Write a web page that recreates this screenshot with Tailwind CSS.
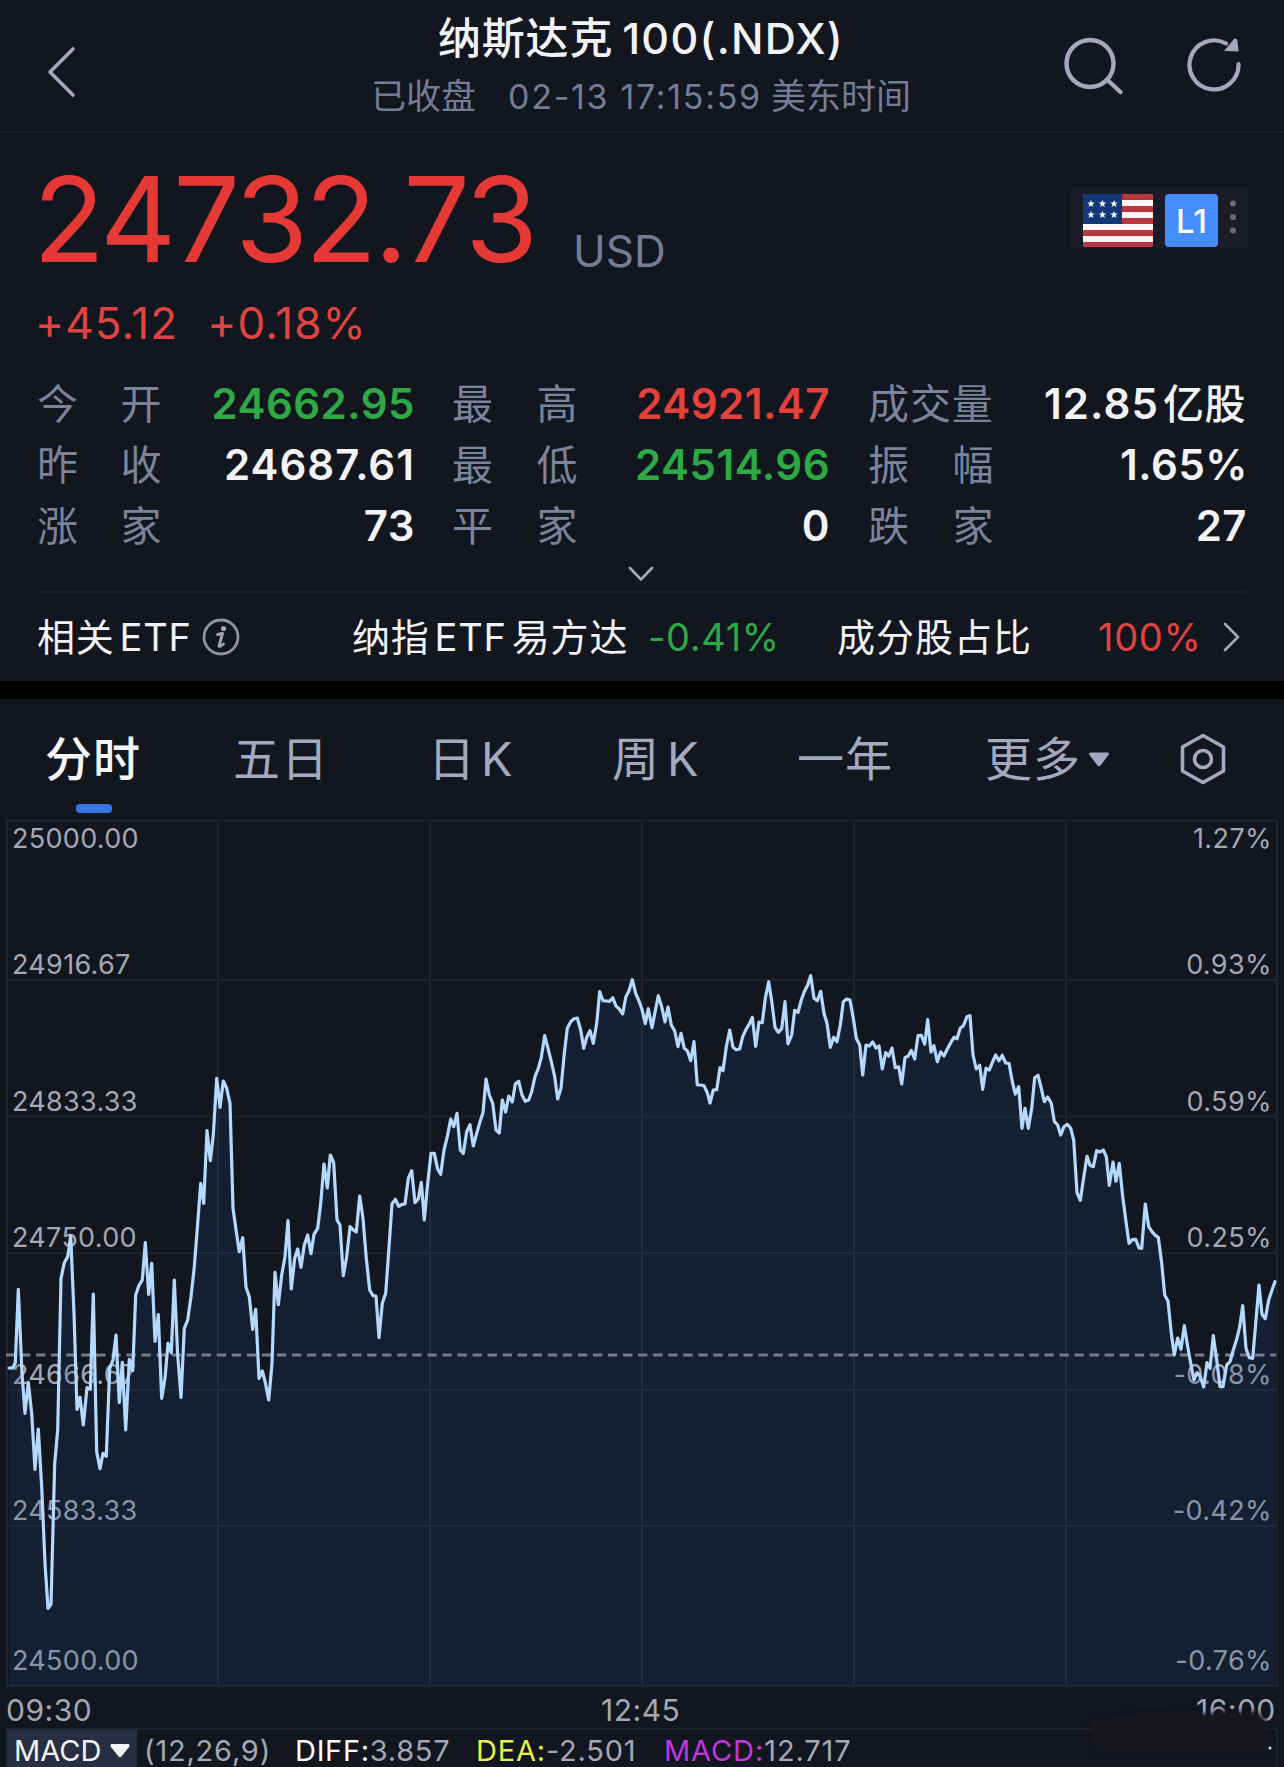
<!DOCTYPE html>
<html lang="zh-CN">
<head>
<meta charset="utf-8">
<title>纳斯达克100(.NDX)</title>
<script src="https://cdn.jsdelivr.net/npm/@tailwindcss/browser@4"></script>
</head>
<body class="w-[1284px] h-[1767px] overflow-hidden bg-[#12161f] font-['Inter','Noto_Sans_CJK_SC',sans-serif] text-[#f2f3f7] whitespace-nowrap">

<header class="flex h-[133px] border-b-2 border-[#1a1e29]">
  <div class="w-[369px] pl-[47px] pt-[46px]">
    <svg class="w-[30px] h-[52px]" viewBox="0 0 30 52" fill="none" stroke="#a3a9bd" stroke-width="3.6" stroke-linecap="round" stroke-linejoin="round"><path d="M26 3 3 26 26 49"/></svg>
  </div>
  <div class="w-[544px] flex flex-col items-center pt-[14px]">
    <h1 class="flex items-center gap-[9px] h-[48px] font-medium"><span class="text-[43px] tracking-[0.8px]">纳斯达克</span><span class="text-[43px] tracking-[1.3px]">100(.NDX)</span></h1>
    <p class="flex items-center h-[40px] mt-[14px] text-[35px] text-[#757c96]"><span>已收盘</span><span class="ml-[32px] text-[34px] tracking-[1.7px]">02-13 17:15:59</span><span class="ml-[9px]">美东时间</span></p>
  </div>
  <div class="flex pl-[149px] pt-[34px]">
    <svg class="w-[64px] h-[64px]" viewBox="0 0 64 64" fill="none" stroke="#a3a9bd" stroke-width="4.4" stroke-linecap="round"><circle cx="28" cy="29.500" r="23.500"/><path d="M45 45.500 58.500 58"/></svg>
    <svg class="ml-[59px] w-[64px] h-[64px]" viewBox="0 0 64 64"><path d="M53.500 30A24.500 24.500 0 1 1 41 9.500" fill="none" stroke="#a3a9bd" stroke-width="4.200" stroke-linecap="round"/><path d="M49.500 4.500Q52 4 52.500 7L53.500 17.500 39 17Z" fill="#a3a9bd"/></svg>
  </div>
</header>

<section class="h-[548px] px-[37px]">
  <div class="flex justify-between h-[145px]">
    <div class="flex items-baseline -ml-[4px] mt-[1px]">
      <span class="text-[118px] leading-[170px] tracking-[-3px] text-[#e43934]">24732.73</span>
      <span class="ml-[38px] text-[44px] leading-[48px] translate-y-[5px] text-[#757c96]">USD</span>
    </div>
    <div class="flex items-start mt-[54px] h-[61px] w-[177px] bg-[#1a1d27] pl-[12px] pt-[7px] -mr-[1px]">
      <svg class="w-[70px] h-[53px] rounded-[3px]" viewBox="0 0 70 53">
        <rect width="70" height="53" fill="#fff5f5"/>
        <g fill="#b9363f"><rect width="70" height="6"/><rect y="12" width="70" height="6"/><rect y="24" width="70" height="6"/><rect y="36" width="70" height="6"/><rect y="48" width="70" height="5"/></g>
        <rect width="39" height="30" fill="#12387a"/>
        <g fill="#f4f7ff">
          <path id="st" d="M8 5.800 9 8.400 11.800 8.500 9.600 10.200 10.400 13 8 11.400 5.600 13 6.400 10.200 4.200 8.500 7 8.400Z"/>
          <use href="#st" x="11.500"/><use href="#st" x="23"/><use href="#st" y="11"/><use href="#st" x="11.500" y="11"/><use href="#st" x="23" y="11"/>
        </g>
      </svg>
      <span class="ml-[12px] flex h-[53px] w-[53px] items-center justify-center rounded-[4px] bg-[#458cff] pt-[2px] text-[33px] font-medium text-white">L1</span>
      <svg class="ml-[12px] w-[6px] h-[40px] mt-[6px]" viewBox="0 0 6 40" fill="#6a6c78"><circle cx="3" cy="3.500" r="3"/><circle cx="3" cy="17" r="3"/><circle cx="3" cy="30.500" r="3"/></svg>
    </div>
  </div>
  <div class="flex h-[48px] mt-[21px] -ml-[2px] items-center gap-[29px] text-[44px] text-[#e14440] tracking-[1.1px]"><span>+45.12</span><span>+0.18%</span></div>

  <div class="mt-[27px] grid grid-cols-[378px_415px_416px] auto-rows-[61px] text-[42px] leading-[60px] tracking-[0.5px]">
    <div class="flex justify-between"><span class="flex w-[125px] justify-between text-[41px] text-[#7c849b]"><i class="not-italic">今</i><i class="not-italic">开</i></span><b class="font-semibold text-[#2fa846]">24662.95</b></div>
    <div class="flex justify-between pl-[37px]"><span class="flex w-[126px] justify-between text-[41px] text-[#7c849b]"><i class="not-italic">最</i><i class="not-italic">高</i></span><b class="font-semibold text-[#e4403c]">24921.47</b></div>
    <div class="flex justify-between pl-[38px]"><span class="text-[41px] text-[#7c849b] tracking-[0.9px]">成交量</span><b class="font-semibold flex gap-[4px]"><span class="tracking-[1.1px]">12.85</span><span class="text-[41px] font-medium">亿股</span></b></div>
    <div class="flex justify-between"><span class="flex w-[125px] justify-between text-[41px] text-[#7c849b]"><i class="not-italic">昨</i><i class="not-italic">收</i></span><b class="font-semibold tracking-[1px]">24687.61</b></div>
    <div class="flex justify-between pl-[37px]"><span class="flex w-[126px] justify-between text-[41px] text-[#7c849b]"><i class="not-italic">最</i><i class="not-italic">低</i></span><b class="font-semibold text-[#2fa846]">24514.96</b></div>
    <div class="flex justify-between pl-[38px]"><span class="flex w-[126px] justify-between text-[41px] text-[#7c849b]"><i class="not-italic">振</i><i class="not-italic">幅</i></span><b class="font-semibold -mr-[2px]">1.65%</b></div>
    <div class="flex justify-between"><span class="flex w-[125px] justify-between text-[41px] text-[#7c849b]"><i class="not-italic">涨</i><i class="not-italic">家</i></span><b class="font-semibold">73</b></div>
    <div class="flex justify-between pl-[37px]"><span class="flex w-[126px] justify-between text-[41px] text-[#7c849b]"><i class="not-italic">平</i><i class="not-italic">家</i></span><b class="font-semibold">0</b></div>
    <div class="flex justify-between pl-[38px]"><span class="flex w-[126px] justify-between text-[41px] text-[#7c849b]"><i class="not-italic">跌</i><i class="not-italic">家</i></span><b class="font-semibold -mr-[1px]">27</b></div>
  </div>
  <div class="h-[36px] flex justify-center border-b-2 border-[#1a1e29] pt-[9px]">
    <svg class="-ml-[2px] w-[26px] h-[16px]" viewBox="0 0 26 16" fill="none" stroke="#a3a9bd" stroke-width="2.600" stroke-linecap="round" stroke-linejoin="round"><path d="M2 2 13 13.500 24 2"/></svg>
  </div>
  <div class="flex items-center h-[88px] text-[38px]">
    <span class="flex w-[165px] items-center gap-[5px] tracking-[0.8px]"><span>相关</span><span>ETF</span></span>
    <svg class="w-[38px] h-[38px]" viewBox="0 0 38 38"><circle cx="19" cy="19" r="17" fill="none" stroke="#8f93a3" stroke-width="2.800"/><circle cx="21.500" cy="10.500" r="2.600" fill="#a3a7b5"/><path d="M15.500 16.500Q19 15.500 20.500 15.500L17 28Q17 29.500 21.500 26" fill="none" stroke="#a3a7b5" stroke-width="2.800" stroke-linecap="round" stroke-linejoin="round"/></svg>
    <span class="ml-[112px] w-[296px] flex items-center gap-[5px] tracking-[0.8px]"><span>纳指</span><span>ETF</span><span>易方达</span></span>
    <span class="w-[189px] text-[#2fa846] tracking-[0.6px]">-0.41%</span>
    <span class="w-[261px] tracking-[1px]">成分股占比</span>
    <span class="w-[125px] text-[#e14440] tracking-[0.7px]">100%</span>
    <svg class="w-[18px] h-[32px]" viewBox="0 0 18 32" fill="none" stroke="#a3a9bd" stroke-width="2.600" stroke-linecap="round" stroke-linejoin="round"><path d="M2 3 15 16 2 29"/></svg>
  </div>
</section>

<div class="h-[18px] bg-black"></div>

<nav class="flex h-[120px] items-start pt-[30px] text-[47px] leading-[60px] tracking-[1px] text-[#a3a9be]">
  <div class="ml-[45px] w-[188px] flex flex-col items-start"><span class="font-medium text-[#f5f6fa]">分时</span><span class="mt-[15px] ml-[31px] h-[9px] w-[36px] rounded-[4px] bg-[#3775e4]"></span></div>
  <span class="w-[195px]">五日</span>
  <span class="w-[184px] flex gap-[5px]"><span>日</span><span>K</span></span>
  <span class="w-[185px] flex gap-[7px]"><span>周</span><span>K</span></span>
  <span class="w-[188px]">一年</span>
  <span class="w-[195px] flex items-center"><span>更多</span><svg class="ml-[7px] w-[22px] h-[15px]" viewBox="0 0 22 15" fill="#a3a9be"><path d="M2.500 0.500H19.500Q22 1 20.500 3L12.500 13.500Q11 15 9.500 13.500L1.500 3Q0 1 2.500 0.500Z"/></svg></span>
  <svg class="mt-[4px] w-[46px] h-[52px]" viewBox="0 0 46 52" fill="none" stroke="#a3a9be" stroke-width="3.600" stroke-linejoin="round"><path d="M23 2.500 43.500 14V38L23 49.500 2.500 38V14Z"/><circle cx="23" cy="26" r="8.500"/></svg>
</nav>

<main class="relative h-[868px]">
  <svg class="absolute inset-0 w-[1284px] h-[868px]" viewBox="0 819 1284 868" fill="none">
    <g stroke="#212530" stroke-width="2">
      <path d="M6 820.500H1278M6 1686H1278M7 820V1686M1277 820V1686"/>
      <path d="M7 980H1277M7 1116.500H1277M7 1253H1277M7 1390H1277M7 1526H1277M218 820V1686M430 820V1686M642 820V1686M854 820V1686M1066 820V1686" stroke="#1f232e"/>
    </g>
  </svg>
  <div class="absolute left-[12px] top-0 text-[27px] leading-[30px] tracking-[0.3px] text-[#a4a8b5]">
    <div class="mt-[5px] h-[126px]">25000.00</div><div class="h-[137px]">24916.67</div><div class="h-[136px]">24833.33</div><div class="h-[137px]">24750.00</div><div class="h-[136px]">24666.67</div><div class="h-[150px]">24583.33</div><div>24500.00</div>
  </div>
  <div class="absolute right-[12px] top-0 text-right text-[27px] leading-[30px] tracking-[0.4px] text-[#a4a8b5]">
    <div class="mt-[5px] h-[126px]">1.27%</div><div class="h-[137px]">0.93%</div><div class="h-[136px]">0.59%</div><div class="h-[137px]">0.25%</div><div class="h-[136px]">-0.08%</div><div class="h-[150px]">-0.42%</div><div>-0.76%</div>
  </div>
  <svg class="absolute inset-0 w-[1284px] h-[868px]" viewBox="0 819 1284 868" fill="none">
    <path id="area" fill="#1c467d" fill-opacity="0.2"/>
    <path d="M6 1355H1276" stroke="#757b8a" stroke-width="2.800" stroke-dasharray="9.300 5.750"/>
    <path id="line" stroke="#b5d9fd" stroke-width="3.200" stroke-linejoin="round" stroke-linecap="round"/>
  </svg>
</main>

<footer>
  <div class="relative flex h-[41px] items-center pl-[6px] pt-[5px] text-[30px] tracking-[0.5px] text-[#a4a8b5]"><span class="w-[595px]">09:30</span><span class="w-[595px]">12:45</span><span>16:00</span>
    <svg class="absolute left-[1070px] top-[16px] w-[214px] h-[62px]" viewBox="0 0 214 62"><defs><filter id="soft" x="-10%" y="-30%" width="120%" height="160%"><feGaussianBlur stdDeviation="2.200"/></filter></defs><path d="M20 16 60 11 120 9 140 11 150 7 172 9 186 8 196 17 199 26 204 40 196 52 24 50Z" fill="#12151e" filter="url(#soft)"/><circle cx="200" cy="45" r="1.500" fill="#d8dae2"/></svg>
  </div>
  <div class="ml-[6px] mr-[6px] flex h-[39px] items-center border-x-2 border-t-2 border-[#1f232e] text-[29px] text-[#a4a8b5]">
    <span class="-ml-[1px] flex h-full w-[130px] items-center bg-[#272e42] pl-[7px] pt-[4px] text-[#f2f3f7]"><span class="w-[96px]">MACD</span><svg class="w-[20px] h-[14px]" viewBox="0 0 20 14" fill="#f2f3f7"><path d="M1.500 0H18.500Q20.500 1 19 3L11.500 12.500Q10 14 8.500 12.500L1 3Q-.5 1 1.500 0Z"/></svg></span>
    <span class="ml-[7px] w-[151px] pt-[4px] tracking-[0.8px]">(12,26,9)</span>
    <span class="w-[181px] pt-[4px] tracking-[0.7px]"><span class="text-white">DIFF:</span>3.857</span>
    <span class="w-[188px] pt-[4px] tracking-[0.8px]"><span class="text-[#e9f04a]">DEA:</span>-2.501</span>
    <span class="pt-[4px] tracking-[0.9px]"><span class="text-[#c236e0]">MACD:</span>12.717</span>
  </div>
</footer>

<script>
// Intraday samples: [origin x, origin y, "x,y ..."] with three units to a pixel.
const parts = [
 [0,1200,"27,504 38,504 46,488 55,268 66,520 75,640 85,547 95,640 105,808 115,687 125,860 135,1090 144,1225 153,1213 164,790 173,690 183,235 193,188 203,170 212,107 222,340 231,628 240,592 250,675 261,563 271,568 280,282 290,755 300,806 309,760 319,769 329,505 339,480 348,405 358,607 367,487 377,690 388,478 398,512 407,285 417,256 427,240 436,128 446,283 455,190 465,424 475,344 485,595 495,535 504,430 514,458 523,240 533,465 543,592 553,385 563,360 573,290 583,200 592,85 602,-50 611,10 621,-208 631,-118 640,-195 650,-365 660,-278 670,-357 680,-335 690,-290 699,25 709,95 718,155 728,113 738,262 748,290 758,388 767,328 777,535 787,513 796,548 806,600"],
 [260,1100,"36,790 45,517 55,614 65,525 75,470 84,362 94,567 104,475 113,447 123,502 133,435 143,405 153,461 162,403 173,385 182,310 192,192 202,264 211,165 221,188 231,360 240,375 250,527 260,470 270,380 280,390 289,396 299,288 309,355 319,475 329,570 339,587 348,588 357,713 367,610 377,580 386,455 396,312 406,298 416,319 426,313 435,312 445,235 455,212 465,308 475,297 484,247 493,360 503,250"],
 [420,950,"33,610 43,610 53,658 62,673 72,600 82,560 92,507 101,530 111,490 121,600 130,610 140,545 150,524 160,588 170,550 180,515 189,488 198,387 208,435 218,460 228,540 238,549 247,450 257,486 266,438 277,456 286,402 296,394 306,435 316,454 326,450 335,425 345,380 355,355 364,322 374,257 384,295 394,335 404,380 413,447 423,415 433,310 442,235 452,215 462,206 472,204 482,240 491,295 500,262 510,242 520,280 530,220 539,125 549,152 559,153 569,154 578,143 588,168 598,177 608,192 617,142 627,122 637,89 647,130 657,153 666,178 676,221 685,176 696,233 705,187 715,137 725,170 735,216 744,171 754,225 764,243 774,290 783,250 793,295 802,302 812,332 822,275 832,405 842,405 852,407 862,428 870,459"],
 [680,950,"100,420 110,419 120,353 129,362 139,290 149,240 159,292 169,299 179,297 188,260 198,238 208,222 217,202 227,289 237,216 247,218 256,145 266,95 276,160 285,232 295,247 305,236 315,155 324,282 335,255 344,181 354,187 364,150 373,125 383,105 392,77 402,145 412,152 422,124 432,190 441,220 451,292 461,262 471,275 481,225 490,155 500,147 510,150 520,205 529,265 539,285 548,375 558,285 568,288 578,276 588,294 597,288 607,357 617,308 626,318 636,294 646,353 656,350 665,402 675,323 685,318 694,301 704,327 714,257 724,256 734,283 743,209 753,306 762,287 772,335 782,306 792,318 802,297 812,278 822,262 831,266 841,234 850,228 861,200"],
 [950,980,"60,107 69,225 79,267 89,256 98,328 108,265 118,270 128,245 137,225 147,242 157,226 167,249 177,250 187,305 196,342 206,320 216,445 225,385 235,445 245,385 254,293 264,286 274,325 283,365 293,351 304,370 313,424 323,435 332,465 342,440 352,433 362,445 371,480 381,638 391,661 400,600 411,529 420,556 430,560 440,512 450,516 460,510 469,530 478,616 489,546 498,604 508,550 518,650 528,725 537,790 547,779 557,778 567,804 575,805 586,672 596,740 606,755 616,766 625,772 635,850 644,945 654,963 664,1060 673,1125 683,1074 693,1108 703,1037 713,1100 722,1150 732,1200 741,1178 751,1190 761,1221 771,1148 780,1165 790,1067 800,1140 810,1220 819,1220 830,1155 840,1145 850,1110 860,1078 869,1040 878,977 888,1105 898,1133 908,1135 917,1030 927,915 936,1003 946,1016 956,960 966,930 975,905"]
];
const pts = parts.flatMap(([ox, oy, s]) => s.split(" ").map(p => {
  const [x, y] = p.split(",").map(Number);
  return (ox + x / 3).toFixed(1) + " " + (oy + y / 3).toFixed(1);
}));
const d = "M" + pts.join("L");
document.getElementById("line").setAttribute("d", d);
document.getElementById("area").setAttribute("d", d + "V1686H9Z");
</script>
</body>
</html>
